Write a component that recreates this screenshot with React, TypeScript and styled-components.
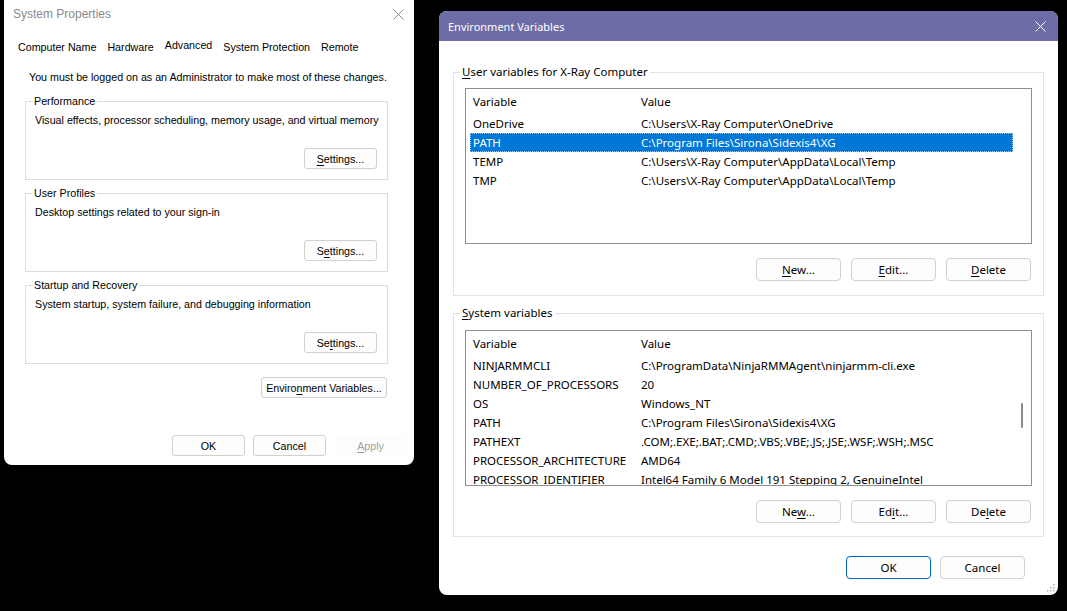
import React from "react";
import styled, { createGlobalStyle } from "styled-components";

const GlobalStyle = createGlobalStyle`
  html, body {
    margin: 0;
    padding: 0;
    background: #000;
  }
  body {
    width: 1067px;
    height: 611px;
    overflow: hidden;
  }
`;

const Desktop = styled.div`
  position: relative;
  width: 1067px;
  height: 611px;
  background: #000;
  overflow: hidden;
`;

// windows are free-floating on the desktop, so they get coordinates
const Window = styled.div<{ $x: number; $y: number; $w: number; $h: number; $topRound?: boolean }>`
  position: absolute;
  left: ${(p) => p.$x}px;
  top: ${(p) => p.$y}px;
  width: ${(p) => p.$w}px;
  height: ${(p) => p.$h}px;
  background: #fff;
  border-radius: ${(p) => (p.$topRound ? "8px" : "0 0 8px 8px")};
  display: flex;
  flex-direction: column;
  overflow: hidden;
  box-sizing: border-box;
`;

const U = styled.span`
  text-decoration: underline;
  text-underline-offset: 2px;
`;

/* ---------- System Properties ---------- */

const ClassicWin = styled(Window)`
  font-family: "Liberation Sans", Arial, sans-serif;
  font-size: 10.7px;
  color: #000;
`;

const ClassicTitle = styled.div`
  height: 28px;
  display: flex;
  align-items: center;
  justify-content: space-between;
  padding: 0 10px 0 9px;
  color: #8a8a8a;
  font-size: 12px;
  flex: none;
`;

const CloseGlyph = styled.svg<{ $color: string }>`
  width: 11px;
  height: 11px;
  stroke: ${(p) => p.$color};
  stroke-width: 1;
  fill: none;
`;

const TabRow = styled.div`
  display: flex;
  gap: 11px;
  height: 18px;
  margin-top: 10px;
  padding-left: 14px;
  flex: none;
`;

const Tab = styled.span<{ $active?: boolean }>`
  line-height: 18px;
  position: relative;
  top: ${(p) => (p.$active ? "-2px" : "0")};
`;

const Notice = styled.div`
  margin-top: 14px;
  padding-left: 25px;
  line-height: 14px;
`;

const ClassicBody = styled.div`
  display: flex;
  flex-direction: column;
  padding: 0 26px 0 21px;
`;

const ClassicGroup = styled.div`
  position: relative;
  height: 79px;
  box-sizing: border-box;
  border: 1px solid #dcdce6;
  margin-top: 13px;
  padding: 11px 10px 10px 9px;
  display: flex;
  flex-direction: column;
  &:first-child {
    margin-top: 17px;
  }
`;

const ClassicLegend = styled.span`
  position: absolute;
  top: -8px;
  left: 7px;
  padding: 0 2px 0 1px;
  background: #fff;
  line-height: 14px;
`;

const Desc = styled.div`
  line-height: 14px;
  white-space: nowrap;
`;

const ClassicButton = styled.button<{ $w: number; $disabled?: boolean }>`
  width: ${(p) => p.$w}px;
  height: 21px;
  box-sizing: border-box;
  border: 1px solid ${(p) => (p.$disabled ? "#fff" : "#d0d0d0")};
  border-radius: 3px;
  background: #fdfdfd;
  font: inherit;
  color: ${(p) => (p.$disabled ? "#a0a0a0" : "#000")};
  padding: 0;
  flex: none;
`;

const GroupButton = styled(ClassicButton)`
  margin-top: auto;
  align-self: flex-end;
`;

const EnvRow = styled.div`
  display: flex;
  justify-content: flex-end;
  margin-top: 13px;
  padding-right: 1px;
`;

const ClassicFooter = styled.div`
  display: flex;
  justify-content: flex-end;
  gap: 8px;
  margin-top: 37px;
  padding-right: 7px;
`;

/* ---------- Environment Variables ---------- */

const ModernWin = styled(Window)`
  font-family: "Noto Sans", "Open Sans", sans-serif;
  font-size: 11.5px;
  color: #000;
`;

const ModernTitle = styled.div`
  height: 30px;
  flex: none;
  background: #6c6ca6;
  color: #fff;
  font-size: 11px;
  display: flex;
  align-items: center;
  justify-content: space-between;
  padding: 0 12px 0 9px;
`;

const ModernBody = styled.div`
  display: flex;
  flex-direction: column;
  padding: 31px 14px 0 14px;
`;

const VarGroup = styled.div`
  position: relative;
  border: 1px solid #e2e2ea;
  padding: 15px 11px 14px 11px;
  display: flex;
  flex-direction: column;
  & + & {
    margin-top: 17px;
    padding-top: 16px;
    padding-bottom: 13px;
  }
`;

const VarLegend = styled.span`
  position: absolute;
  top: -9px;
  left: 6px;
  padding: 0 2px;
  background: #fff;
  line-height: 16px;
`;

const ListView = styled.div`
  position: relative;
  height: 156px;
  box-sizing: border-box;
  border: 1px solid #8f8f8f;
  overflow: hidden;
`;

const ListHeader = styled.div`
  display: flex;
  height: 25px;
  align-items: center;
  padding-left: 7px;
`;

const Row = styled.div<{ $selected?: boolean }>`
  display: flex;
  align-items: center;
  height: 19px;
  width: 543px;
  margin-left: 4px;
  padding-left: 3px;
  box-sizing: border-box;
  white-space: nowrap;
  background: ${(p) => (p.$selected ? "#0078d7" : "transparent")};
  color: ${(p) => (p.$selected ? "#fff" : "#000")};
  outline: ${(p) => (p.$selected ? "1px dotted #9cc8f0" : "none")};
  outline-offset: -1px;
`;

const Cell = styled.span<{ $w?: number }>`
  flex: none;
  width: ${(p) => (p.$w ? `${p.$w}px` : "auto")};
  white-space: nowrap;
`;

const ScrollThumb = styled.div`
  position: absolute;
  right: 8px;
  top: 72px;
  width: 2px;
  height: 25px;
  background: #8a8a8a;
  border-radius: 1px;
`;

const ButtonRow = styled.div`
  display: flex;
  justify-content: flex-end;
  gap: 10px;
  margin-top: 14px;
  padding-right: 1px;
`;

const ModernButton = styled.button<{ $primary?: boolean }>`
  width: 85px;
  height: 23px;
  box-sizing: border-box;
  border: 1px solid ${(p) => (p.$primary ? "#0067c0" : "#d0d0d0")};
  border-radius: 4px;
  background: #fdfdfd;
  font: inherit;
  color: #000;
  padding: 0;
`;

const ModernFooter = styled.div`
  display: flex;
  justify-content: flex-end;
  gap: 9px;
  margin-top: 19px;
  padding-right: 33px;
`;

const Grip = styled.svg`
  position: absolute;
  right: 3px;
  bottom: 3px;
  width: 8px;
  height: 8px;
  fill: #b0b0b0;
`;

type Variable = { name: string; value: string };

const userVars: Variable[] = [
  { name: "OneDrive", value: "C:\\Users\\X-Ray Computer\\OneDrive" },
  { name: "PATH", value: "C:\\Program Files\\Sirona\\Sidexis4\\XG" },
  { name: "TEMP", value: "C:\\Users\\X-Ray Computer\\AppData\\Local\\Temp" },
  { name: "TMP", value: "C:\\Users\\X-Ray Computer\\AppData\\Local\\Temp" },
];

const systemVars: Variable[] = [
  { name: "NINJARMMCLI", value: "C:\\ProgramData\\NinjaRMMAgent\\ninjarmm-cli.exe" },
  { name: "NUMBER_OF_PROCESSORS", value: "20" },
  { name: "OS", value: "Windows_NT" },
  { name: "PATH", value: "C:\\Program Files\\Sirona\\Sidexis4\\XG" },
  { name: "PATHEXT", value: ".COM;.EXE;.BAT;.CMD;.VBS;.VBE;.JS;.JSE;.WSF;.WSH;.MSC" },
  { name: "PROCESSOR_ARCHITECTURE", value: "AMD64" },
  { name: "PROCESSOR_IDENTIFIER", value: "Intel64 Family 6 Model 191 Stepping 2, GenuineIntel" },
];

const Close = ({ color }: { color: string }) => (
  <CloseGlyph $color={color} viewBox="0 0 11 11">
    <path d="M0.5 0.5 L10.5 10.5 M10.5 0.5 L0.5 10.5" />
  </CloseGlyph>
);

const VarList = ({ vars, selected, scroll }: { vars: Variable[]; selected?: number; scroll?: boolean }) => (
  <ListView>
    <ListHeader>
      <Cell $w={168}>Variable</Cell>
      <Cell>Value</Cell>
    </ListHeader>
    {vars.map((v, i) => (
      <Row key={v.name + i} $selected={i === selected}>
        <Cell $w={168}>{v.name}</Cell>
        <Cell>{v.value}</Cell>
      </Row>
    ))}
    {scroll && <ScrollThumb />}
  </ListView>
);

export default function App() {
  return (
    <>
      <GlobalStyle />
      <Desktop>
        <ClassicWin $x={4} $y={0} $w={410} $h={465}>
          <ClassicTitle>
            <span>System Properties</span>
            <Close color="#8a8a8a" />
          </ClassicTitle>
          <TabRow>
            <Tab>Computer Name</Tab>
            <Tab>Hardware</Tab>
            <Tab $active>Advanced</Tab>
            <Tab>System Protection</Tab>
            <Tab>Remote</Tab>
          </TabRow>
          <Notice>You must be logged on as an Administrator to make most of these changes.</Notice>
          <ClassicBody>
            <ClassicGroup>
              <ClassicLegend>Performance</ClassicLegend>
              <Desc>Visual effects, processor scheduling, memory usage, and virtual memory</Desc>
              <GroupButton $w={73}>
                <U>S</U>ettings...
              </GroupButton>
            </ClassicGroup>
            <ClassicGroup>
              <ClassicLegend>User Profiles</ClassicLegend>
              <Desc>Desktop settings related to your sign-in</Desc>
              <GroupButton $w={73}>
                S<U>e</U>ttings...
              </GroupButton>
            </ClassicGroup>
            <ClassicGroup>
              <ClassicLegend>Startup and Recovery</ClassicLegend>
              <Desc>System startup, system failure, and debugging information</Desc>
              <GroupButton $w={73}>
                Se<U>t</U>tings...
              </GroupButton>
            </ClassicGroup>
            <EnvRow>
              <ClassicButton $w={126}>
                Enviro<U>n</U>ment Variables...
              </ClassicButton>
            </EnvRow>
          </ClassicBody>
          <ClassicFooter>
            <ClassicButton $w={73}>OK</ClassicButton>
            <ClassicButton $w={73}>Cancel</ClassicButton>
            <ClassicButton $w={73} $disabled>
              <U>A</U>pply
            </ClassicButton>
          </ClassicFooter>
        </ClassicWin>

        <ModernWin $x={439} $y={11} $w={619} $h={584} $topRound>
          <ModernTitle>
            <span>Environment Variables</span>
            <Close color="#ffffff" />
          </ModernTitle>
          <ModernBody>
            <VarGroup>
              <VarLegend>
                <U>U</U>ser variables for X-Ray Computer
              </VarLegend>
              <VarList vars={userVars} selected={1} />
              <ButtonRow>
                <ModernButton>
                  <U>N</U>ew...
                </ModernButton>
                <ModernButton>
                  <U>E</U>dit...
                </ModernButton>
                <ModernButton>
                  <U>D</U>elete
                </ModernButton>
              </ButtonRow>
            </VarGroup>
            <VarGroup>
              <VarLegend>
                <U>S</U>ystem variables
              </VarLegend>
              <VarList vars={systemVars} scroll />
              <ButtonRow>
                <ModernButton>
                  Ne<U>w</U>...
                </ModernButton>
                <ModernButton>
                  Ed<U>i</U>t...
                </ModernButton>
                <ModernButton>
                  De<U>l</U>ete
                </ModernButton>
              </ButtonRow>
            </VarGroup>
          </ModernBody>
          <ModernFooter>
            <ModernButton $primary>OK</ModernButton>
            <ModernButton>Cancel</ModernButton>
          </ModernFooter>
          <Grip viewBox="0 0 8 8">
            <rect x="6" y="0" width="1.5" height="1.5" />
            <rect x="3" y="3" width="1.5" height="1.5" />
            <rect x="6" y="3" width="1.5" height="1.5" />
            <rect x="0" y="6" width="1.5" height="1.5" />
            <rect x="3" y="6" width="1.5" height="1.5" />
            <rect x="6" y="6" width="1.5" height="1.5" />
          </Grip>
        </ModernWin>
      </Desktop>
    </>
  );
}
